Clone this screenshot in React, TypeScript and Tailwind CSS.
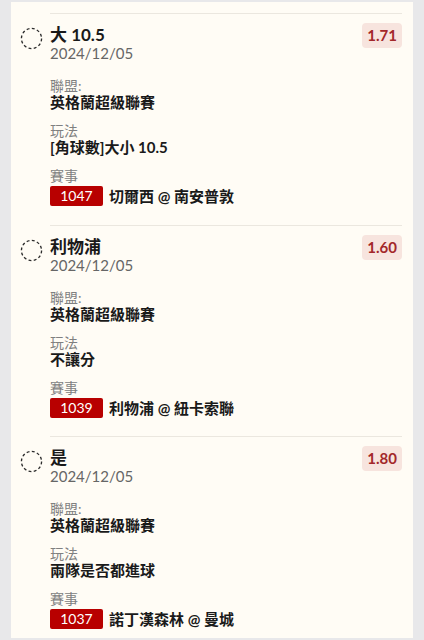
type Bet = {
  pick: string;
  date: string;
  odds: string;
  league: string;
  market: string;
  code: string;
  match: string;
};

const bets: Bet[] = [
  {
    pick: "大 10.5",
    date: "2024/12/05",
    odds: "1.71",
    league: "英格蘭超級聯賽",
    market: "[角球數]大小 10.5",
    code: "1047",
    match: "切爾西 @ 南安普敦",
  },
  {
    pick: "利物浦",
    date: "2024/12/05",
    odds: "1.60",
    league: "英格蘭超級聯賽",
    market: "不讓分",
    code: "1039",
    match: "利物浦 @ 紐卡索聯",
  },
  {
    pick: "是",
    date: "2024/12/05",
    odds: "1.80",
    league: "英格蘭超級聯賽",
    market: "兩隊是否都進球",
    code: "1037",
    match: "諾丁漢森林 @ 曼城",
  },
];

const DashedCircle = () => (
  <svg viewBox="0 0 24 24" className="h-[23px] w-[23px]" aria-hidden="true">
    <circle
      cx="12"
      cy="12"
      r="10.5"
      fill="none"
      stroke="#2b2b2b"
      strokeWidth="1.4"
      strokeDasharray="3 2.5"
    />
  </svg>
);

const BetRow = ({ bet }: { bet: Bet }) => {
  return (
    <div className="flex">
      <div className="flex w-[39px] shrink-0 items-start justify-center pt-[14px] pl-[1px]">
        <DashedCircle />
      </div>
      <div className="mr-[11px] flex-1 border-t border-[#ebe7df] pt-[12px] pb-[17px]">
        <div className="flex items-start justify-between">
          <div>
            <div className="text-[17px] font-bold leading-[18px] text-[#1a1a1a]">
              {bet.pick}
            </div>
            <div className="text-[15px] leading-[18px] text-[#666]">
              {bet.date}
            </div>
          </div>
          <div className="-mt-[3px] rounded-[4px] bg-[#f7e4de] px-[5px] py-[3px] text-[15px] font-bold leading-[19px] text-[#a3282a]">
            {bet.odds}
          </div>
        </div>

        <div className="mt-[16px] flex flex-col gap-[12px]">
          <div>
            <div className="text-[14px] leading-[15px] text-[#808080]">聯盟:</div>
            <div className="text-[15px] font-bold leading-[18px] text-[#1a1a1a]">
              {bet.league}
            </div>
          </div>
          <div>
            <div className="text-[14px] leading-[15px] text-[#808080]">玩法</div>
            <div className="text-[15px] font-bold leading-[18px] text-[#1a1a1a]">
              {bet.market}
            </div>
          </div>
          <div>
            <div className="text-[14px] leading-[15px] text-[#808080]">賽事</div>
            <div className="mt-[2px] flex items-center gap-[6px]">
              <span className="flex h-[20px] w-[53px] items-center justify-center rounded-[2px] bg-[#b80000] text-[14px] leading-none text-white">
                {bet.code}
              </span>
              <span className="text-[15px] font-bold text-[#1a1a1a]">
                {bet.match}
              </span>
            </div>
          </div>
        </div>
      </div>
    </div>
  );
};

export default function App() {
  return (
    <div className="h-[640px] overflow-hidden bg-[#e8e8ea] px-[11px] pt-[2px] font-['Lato','Noto_Sans_CJK_TC',sans-serif]">
      <div className="h-[636px] overflow-hidden bg-[#fffcf5] pt-[11px]">
        {bets.map((bet) => (
          <BetRow key={bet.code} bet={bet} />
        ))}
      </div>
    </div>
  );
}
